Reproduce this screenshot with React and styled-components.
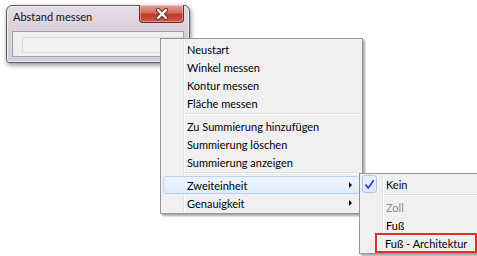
import React from "react";
import styled, { createGlobalStyle } from "styled-components";

const GlobalStyle = createGlobalStyle`
  html, body {
    margin: 0;
    padding: 0;
    background: #ffffff;
  }
  body {
    font-family: Lato, "Noto Sans", sans-serif;
    font-size: 11px;
    color: #000;
  }
`;

const Desktop = styled.div`
  position: relative;
  width: 477px;
  height: 256px;
  overflow: hidden;
  background: #ffffff;
`;

const Window = styled.div`
  position: absolute;
  left: 6px;
  top: 5px;
  width: 184px;
  height: 58px;
  border: 1px solid #5e5a60;
  border-radius: 6px 6px 3px 3px;
  background: linear-gradient(180deg, #e4dde6 0%, #d9d0dc 45%, #d6cdd9 100%);
  box-shadow: 1px 2px 5px rgba(0, 0, 0, 0.45), inset 0 0 0 1px rgba(255, 255, 255, 0.6);
  display: flex;
  flex-direction: column;
  padding: 0 5px 5px 5px;
  box-sizing: border-box;
`;

const TitleBar = styled.div`
  height: 25px;
  display: flex;
  align-items: flex-start;
  justify-content: space-between;
`;

const Title = styled.span`
  margin-top: 4px;
  margin-left: 1px;
  font-size: 11px;
  color: #111;
`;

const CloseButton = styled.div`
  width: 43px;
  height: 17px;
  margin-top: -1px;
  border: 1px solid #6b2a24;
  border-top: none;
  border-radius: 0 0 4px 4px;
  background: linear-gradient(180deg, #e8a096 0%, #d4685a 45%, #c23a2a 55%, #d0584a 100%);
  box-shadow: inset 0 0 0 1px rgba(255, 255, 255, 0.35);
  display: flex;
  align-items: center;
  justify-content: center;
`;

const ClientArea = styled.div`
  flex: 1;
  border: 1px solid #a79fab;
  background: #efefef;
  padding: 5px 0 3px 9px;
  box-sizing: border-box;
  display: flex;
`;

const TextBox = styled.div`
  flex: 1;
  border: 1px solid #d9d9d9;
  background: #f2f2f2;
`;

const Menu = styled.div`
  position: absolute;
  left: ${(p) => p.$left}px;
  top: ${(p) => p.$top}px;
  width: ${(p) => p.$width}px;
  border: 1px solid #979797;
  background: #f0f0f0;
  padding: 1px 2px;
  box-sizing: border-box;
  box-shadow: 2px 2px 2px rgba(0, 0, 0, 0.35);
  display: flex;
  flex-direction: column;
  &::before {
    content: "";
    position: absolute;
    left: ${(p) => p.$gutter}px;
    top: 1px;
    bottom: 1px;
    width: 1px;
    background: #e2e3e3;
    box-shadow: 1px 0 0 #ffffff;
  }
`;

const Item = styled.div`
  position: relative;
  height: 18px;
  display: flex;
  align-items: center;
  padding-left: ${(p) => p.$pad}px;
  padding-right: 7px;
  color: ${(p) => (p.$disabled ? "#8d8d8d" : "#000")};
  border: 1px solid transparent;
  border-radius: 3px;
  box-sizing: border-box;
  white-space: nowrap;
  ${(p) =>
    p.$active &&
    `
    background: linear-gradient(180deg, #eef4fc 0%, #e1ecfa 100%);
    border-color: #b8d2f2;
  `}
`;

const Separator = styled.div`
  height: 1px;
  margin: 1px 0 2px ${(p) => p.$indent}px;
  background: #e0e0e0;
  border-bottom: 1px solid #ffffff;
`;

const Arrow = styled.span`
  margin-left: auto;
  width: 0;
  height: 0;
  border-top: 3px solid transparent;
  border-bottom: 3px solid transparent;
  border-left: 3px solid #000;
`;

const CheckBox = styled.span`
  position: absolute;
  left: -1px;
  top: -1px;
  width: 15px;
  height: 18px;
  box-sizing: border-box;
  border: 1px solid #a9c6ef;
  border-radius: 3px;
  background: linear-gradient(180deg, #eaf2fd 0%, #dce9fa 100%);
  display: flex;
  align-items: center;
  justify-content: center;
`;

const Marked = styled.span`
  display: flex;
  align-items: center;
  height: 20px;
  box-sizing: border-box;
  border: 2px solid #e0302a;
  padding: 0 8px;
  margin-left: -11px;
`;

function CloseIcon() {
  return (
    <svg width="16" height="12" viewBox="0 0 16 12">
      <path
        d="M4 2 L12 10 M12 2 L4 10"
        stroke="#5a2a26"
        strokeWidth="4.2"
        strokeLinecap="round"
      />
      <path
        d="M4 2 L12 10 M12 2 L4 10"
        stroke="#ffffff"
        strokeWidth="2.4"
        strokeLinecap="round"
      />
    </svg>
  );
}

function CheckIcon() {
  return (
    <svg width="11" height="11" viewBox="0 0 11 11">
      <path
        d="M1.5 5.5 L4.2 9 L9.8 1.2"
        fill="none"
        stroke="#1f3fc4"
        strokeWidth="1.6"
        strokeLinejoin="round"
      />
    </svg>
  );
}

export default function App() {
  return (
    <Desktop>
      <GlobalStyle />
      <Window>
        <TitleBar>
          <Title>Abstand messen</Title>
          <CloseButton>
            <CloseIcon />
          </CloseButton>
        </TitleBar>
        <ClientArea>
          <TextBox />
        </ClientArea>
      </Window>

      <Menu $left={160} $top={38} $width={203} $gutter={22}>
        <Item $pad={23}>Neustart</Item>
        <Item $pad={23}>Winkel messen</Item>
        <Item $pad={23}>Kontur messen</Item>
        <Item $pad={23}>Fläche messen</Item>
        <Separator $indent={21} />
        <Item $pad={23}>Zu Summierung hinzufügen</Item>
        <Item $pad={23}>Summierung löschen</Item>
        <Item $pad={23}>Summierung anzeigen</Item>
        <Separator $indent={21} />
        <Item $pad={23} $active>
          Zweiteinheit
          <Arrow />
        </Item>
        <Item $pad={23}>
          Genauigkeit
          <Arrow />
        </Item>
      </Menu>

      <Menu $left={359} $top={173} $width={130} $gutter={22}>
        <Item $pad={23}>
          <CheckBox>
            <CheckIcon />
          </CheckBox>
          Kein
        </Item>
        <Separator $indent={21} />
        <Item $pad={23} $disabled>
          Zoll
        </Item>
        <Item $pad={23}>Fuß</Item>
        <Item $pad={23}>
          <Marked>Fuß - Architektur</Marked>
        </Item>
      </Menu>
    </Desktop>
  );
}
